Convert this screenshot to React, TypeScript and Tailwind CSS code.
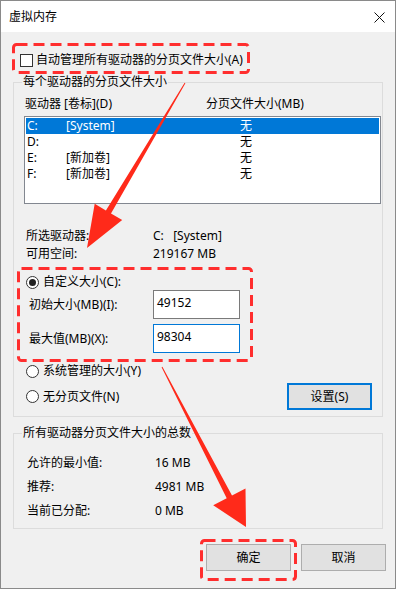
import React from 'react';

const drives = [
    { letter: 'C:', label: '[System]', size: '无', selected: true },
    { letter: 'D:', label: '', size: '无', selected: false },
    { letter: 'E:', label: '[新加卷]', size: '无', selected: false },
    { letter: 'F:', label: '[新加卷]', size: '无', selected: false },
];

function Radio({ checked }: { checked?: boolean }) {
    return (
        <span className="w-[13px] h-[13px] rounded-full border border-[#333] bg-white flex items-center justify-center shrink-0">
            {checked && <span className="w-[7px] h-[7px] rounded-full bg-[#222]" />}
        </span>
    );
}

function Annotations() {
    return (
        <svg className="absolute inset-0 pointer-events-none" width="396" height="589" viewBox="0 0 396 589">
            <g fill="none" stroke="#ff2e2e" strokeWidth="3" strokeDasharray="11 6">
                <rect x="12.5" y="43.5" width="235" height="28" rx="3" />
                <rect x="17.5" y="267.5" width="233" height="92" rx="3" />
                <rect x="200.5" y="539.5" width="94" height="39" rx="3" />
            </g>
            <g fill="#ff2a1a">
                {/* arrow from the checkbox down to the free-space labels */}
                <polygon points="184.4,82.3 110.0,212.4 121.2,219.1 86,247 93.7,202.7 104.9,209.4 183.6,81.7" />
                {/* arrow from the custom size box down to OK */}
                <polygon points="161.4,365.8 231.0,494.4 244.5,487.5 245,526 212.2,504.2 225.7,497.2 160.6,366.2" />
            </g>
        </svg>
    );
}

export default function App() {
    return (
        <div className="relative w-[396px] h-[589px] border border-[#8a8a8a] bg-[#f0f0f0] flex flex-col text-[12px] leading-[16px] text-black font-['Segoe_UI','Noto_Sans','Noto_Sans_CJK_SC',sans-serif] overflow-hidden">
            {/* Title bar */}
            <div className="h-[31px] bg-white flex items-center justify-between pl-[8px] pr-[10px] shrink-0">
                <span className="pt-[1px]">虚拟内存</span>
                <svg width="11" height="11" viewBox="0 0 11 11" className="mt-[1px]">
                    <path d="M0.5 0.5L10.5 10.5M10.5 0.5L0.5 10.5" stroke="#111" strokeWidth="1" />
                </svg>
            </div>

            {/* Auto manage */}
            <div className="mt-[20px] ml-[19px] flex items-center gap-[3px] h-[16px]">
                <span className="w-[13px] h-[13px] border border-[#333] bg-white shrink-0" />
                <span>自动管理所有驱动器的分页文件大小(A)</span>
            </div>

            {/* Per drive group */}
            <fieldset className="mt-[6px] ml-[12px] w-[370px] border border-[#dcdcdc] pb-[6px]">
                <legend className="ml-[8px] px-[1px]">每个驱动器的分页文件大小</legend>
                <div className="flex pt-[6px] pl-[11px] h-[22px]">
                    <span className="w-[181px]">驱动器 [卷标](D)</span>
                    <span>分页文件大小(MB)</span>
                </div>
                <div className="mt-[4px] ml-[10px] w-[357px] h-[88px] border border-[#828790] bg-white p-[1px]">
                    {drives.map((d) => (
                        <div
                            key={d.letter}
                            className={`flex h-[16px] pl-[1px] ${d.selected ? 'bg-[#0078d7] text-white' : ''}`}
                        >
                            <span className="w-[39px]">{d.letter}</span>
                            <span className="w-[174px]">{d.label}</span>
                            <span>{d.size}</span>
                        </div>
                    ))}
                </div>

                <div className="mt-[24px] pl-[12px] flex flex-col gap-[2px]">
                    <div className="flex h-[16px]">
                        <span className="w-[127px]">所选驱动器:</span>
                        <span>C:&nbsp;&nbsp;&nbsp;[System]</span>
                    </div>
                    <div className="flex h-[16px]">
                        <span className="w-[127px]">可用空间:</span>
                        <span>219167 MB</span>
                    </div>
                </div>

                <div className="mt-[12px] pl-[12px] flex items-center gap-[4px] h-[16px]">
                    <Radio checked />
                    <span>自定义大小(C):</span>
                </div>
                <div className="pl-[15px] flex items-center h-[29px]">
                    <span className="w-[124px]">初始大小(MB)(I):</span>
                    <div className="w-[87px] h-[29px] border border-[#7a7a7a] bg-white pl-[3px] pt-[4px]">49152</div>
                </div>
                <div className="mt-[5px] pl-[15px] flex items-center h-[29px]">
                    <span className="w-[124px]">最大值(MB)(X):</span>
                    <div className="w-[87px] h-[29px] border border-[#0078d7] bg-white pl-[3px] pt-[4px]">98304</div>
                </div>

                <div className="mt-[10px] pl-[12px] flex items-center gap-[4px] h-[16px]">
                    <Radio />
                    <span>系统管理的大小(Y)</span>
                </div>
                <div className="mt-[4px] pl-[12px] pr-[10px] flex items-center justify-between h-[27px]">
                    <div className="flex items-center gap-[4px]">
                        <Radio />
                        <span>无分页文件(N)</span>
                    </div>
                    <button className="w-[85px] h-[27px] border-2 border-[#0078d7] bg-[#e1e1e1]">设置(S)</button>
                </div>
            </fieldset>

            {/* Totals group */}
            <fieldset className="mt-[8px] ml-[12px] w-[370px] border border-[#dcdcdc] pt-[14px] pb-[9px]">
                <legend className="ml-[8px] px-[1px]">所有驱动器分页文件大小的总数</legend>
                <div className="pl-[13px] flex flex-col gap-[8px]">
                    <div className="flex h-[16px]">
                        <span className="w-[128px]">允许的最小值:</span>
                        <span>16 MB</span>
                    </div>
                    <div className="flex h-[16px]">
                        <span className="w-[128px]">推荐:</span>
                        <span>4981 MB</span>
                    </div>
                    <div className="flex h-[16px]">
                        <span className="w-[128px]">当前已分配:</span>
                        <span>0 MB</span>
                    </div>
                </div>
            </fieldset>

            {/* Dialog buttons */}
            <div className="mt-[15px] mr-[9px] flex justify-end gap-[10px]">
                <button className="w-[85px] h-[27px] border border-[#adadad] bg-[#e1e1e1]">确定</button>
                <button className="w-[85px] h-[27px] border border-[#adadad] bg-[#e1e1e1]">取消</button>
            </div>

            <Annotations />
        </div>
    );
}
